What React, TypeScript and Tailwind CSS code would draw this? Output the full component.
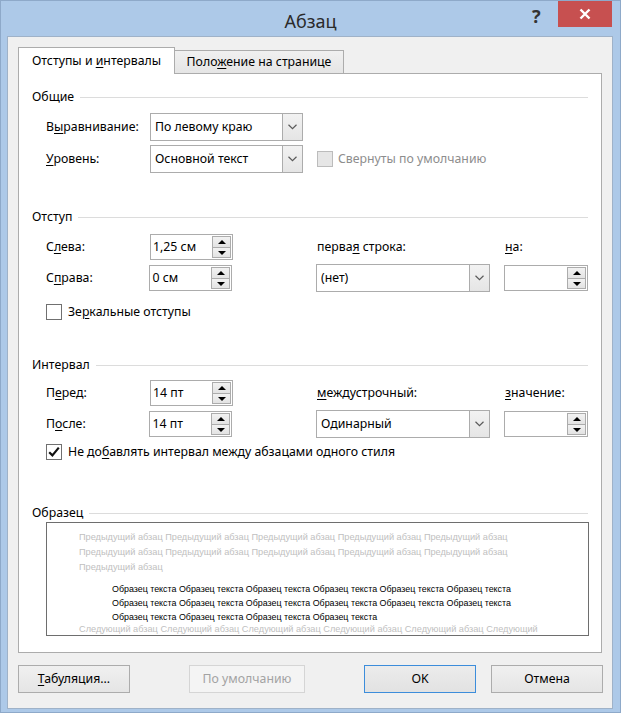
import React from "react";

const U = ({ children }: { children: React.ReactNode }) => (
  <span className="underline decoration-1 underline-offset-[2px]">{children}</span>
);

function Chevron() {
  return (
    <svg width="9" height="6" viewBox="0 0 9 6">
      <path d="M0.5 0.8 L4.5 4.6 L8.5 0.8" fill="none" stroke="#5a5a5a" strokeWidth="1.2" />
    </svg>
  );
}

function Dropdown({ value, width }: { value: string; width: string }) {
  return (
    <div className={`flex h-[28px] ${width} border border-[#acacac] bg-white`}>
      <div className="flex flex-1 items-center pl-[4px] text-black">
        <span>{value}</span>
      </div>
      <div className="flex w-[20px] items-center justify-center border-l border-[#acacac] bg-gradient-to-b from-[#f2f2f2] to-[#e5e5e5]">
        <Chevron />
      </div>
    </div>
  );
}

function Spin({ value, width }: { value: string; width: string }) {
  return (
    <div className={`flex h-[26px] ${width} border border-[#acacac] bg-white`}>
      <div className="flex flex-1 items-center pl-[2px] text-black">
        <span>{value}</span>
      </div>
      <div className="flex w-[21px] flex-col p-[1px]">
        <div className="flex h-[12px] items-center justify-center border border-[#acacac] bg-gradient-to-b from-[#f2f2f2] to-[#e3e3e3]">
          <svg width="8" height="4" viewBox="0 0 8 4">
            <path d="M4 0 L8 4 L0 4 Z" fill="#000" />
          </svg>
        </div>
        <div className="-mt-[1px] flex h-[11px] items-center justify-center border border-[#acacac] bg-gradient-to-b from-[#f2f2f2] to-[#e3e3e3]">
          <svg width="8" height="4" viewBox="0 0 8 4">
            <path d="M0 0 L8 0 L4 4 Z" fill="#000" />
          </svg>
        </div>
      </div>
    </div>
  );
}

function Checkbox({ checked, disabled }: { checked?: boolean; disabled?: boolean }) {
  return (
    <div
      className={`flex h-[16px] w-[16px] shrink-0 items-center justify-center border ${
        disabled ? "border-[#bcbcbc] bg-[#e6e6e6]" : "border-[#707070] bg-white"
      }`}
    >
      {checked && (
        <svg width="14" height="14" viewBox="0 0 14 14">
          <path d="M2.2 7.2 L5.4 10.4 L11.8 2.6" fill="none" stroke="#111" strokeWidth="2.2" />
        </svg>
      )}
    </div>
  );
}

function Header({ children }: { children: React.ReactNode }) {
  return (
    <div className="flex h-[16px] items-center">
      <span className="text-black">{children}</span>
      <div className="ml-[6px] h-px flex-1 bg-[#dcdcdc]" />
    </div>
  );
}

function Btn({ children, className }: { children: React.ReactNode; className: string }) {
  return (
    <div className={`flex h-[28px] w-[112px] items-center justify-center border ${className}`}>
      <span>{children}</span>
    </div>
  );
}

const grayLine = "Предыдущий абзац Предыдущий абзац Предыдущий абзац Предыдущий абзац Предыдущий абзац";
const sample6 = "Образец текста Образец текста Образец текста Образец текста Образец текста Образец текста";
const sample4 = "Образец текста Образец текста Образец текста Образец текста";
const nextLine = "Следующий абзац Следующий абзац Следующий абзац Следующий абзац Следующий абзац Следующий";

export default function App() {
  return (
    <div className="flex h-[713px] w-[621px] flex-col overflow-hidden border border-[#8ea9c9] bg-[#adc9e8] font-['Segoe_UI','Noto_Sans',sans-serif] text-[12.3px] leading-[16px] text-black">
      {/* Title bar */}
      <div className="relative flex h-[35px] shrink-0 items-center justify-center">
        <span className="pt-[4px] text-[18px] leading-[24px] text-[#2b2b2b]">Абзац</span>
        <span className="absolute left-[531px] top-[3px] text-[18px] leading-[24px] font-bold text-[#333]">?</span>
        <div className="absolute right-[8px] top-[-1px] flex h-[27px] w-[54px] items-center justify-center bg-[#c75050]">
          <svg width="12" height="12" viewBox="0 0 12 12">
            <path d="M1.5 1.5 L10.5 10.5 M10.5 1.5 L1.5 10.5" stroke="#fff" strokeWidth="2.4" />
          </svg>
        </div>
      </div>

      {/* Content */}
      <div className="ml-[6px] mr-[7px] flex h-[673px] shrink-0 flex-col border border-[#9fb2c8] bg-[#f0f0f0] pl-[10px] pt-[10px]">
        {/* Tabs */}
        <div className="flex h-[26px] items-start">
          <div className="relative z-10 flex h-[27px] w-[157px] items-center justify-center border-l border-r border-t border-[#acacac] bg-white">
            <span>
              Отступы и <U>и</U>нтервалы
            </span>
          </div>
          <div className="mt-[3px] flex h-[23px] w-[169px] items-center justify-center border-r border-t border-[#acacac] bg-gradient-to-b from-[#f0f0f0] to-[#e5e5e5]">
            <span>
              Поло<U>ж</U>ение на странице
            </span>
          </div>
        </div>

        {/* Panel */}
        <div className="flex h-[580px] w-[584px] flex-col border border-[#acacac] bg-white px-[13px]">
          <div className="mt-[15px]">
            <Header>Общие</Header>
          </div>
          <div className="mt-[8px] flex h-[28px] items-center pl-[14px]">
            <div className="w-[104px]">
              В<U>ы</U>равнивание:
            </div>
            <Dropdown value="По левому краю" width="w-[153px]" />
          </div>
          <div className="mt-[4px] flex h-[28px] items-center pl-[14px]">
            <div className="w-[104px]">
              <U>У</U>ровень:
            </div>
            <Dropdown value="Основной текст" width="w-[153px]" />
            <div className="ml-[14px] flex items-center">
              <Checkbox disabled />
              <span className="ml-[5px] text-[#8d8d8d]">Свернуты по умолчанию</span>
            </div>
          </div>

          <div className="mt-[36px]">
            <Header>Отступ</Header>
          </div>
          <div className="mt-[9px] flex h-[26px] items-center pl-[14px]">
            <div className="w-[104px]">
              С<U>л</U>ева:
            </div>
            <Spin value="1,25 см" width="w-[83px]" />
            <div className="ml-[84px] w-[188px]">
              перва<U>я</U> строка:
            </div>
            <div>
              <U>н</U>а:
            </div>
          </div>
          <div className="mt-[4px] flex h-[28px] items-center pl-[14px]">
            <div className="w-[104px]">
              С<U>п</U>рава:
            </div>
            <Spin value="0 см" width="w-[83px]" />
            <div className="ml-[84px]">
              <Dropdown value="(нет)" width="w-[174px]" />
            </div>
            <div className="ml-[14px]">
              <Spin value="" width="w-[84px]" />
            </div>
          </div>
          <div className="mt-[12px] flex h-[16px] items-center pl-[14px]">
            <Checkbox />
            <span className="ml-[6px]">
              Зе<U>р</U>кальные отступы
            </span>
          </div>

          <div className="mt-[37px]">
            <Header>Интервал</Header>
          </div>
          <div className="mt-[7px] flex h-[26px] items-center pl-[14px]">
            <div className="w-[104px]">
              П<U>е</U>ред:
            </div>
            <Spin value="14 пт" width="w-[83px]" />
            <div className="ml-[84px] w-[188px]">
              <U>м</U>еждустрочный:
            </div>
            <div>
              <U>з</U>начение:
            </div>
          </div>
          <div className="mt-[4px] flex h-[28px] items-center pl-[14px]">
            <div className="w-[104px]">
              П<U>о</U>сле:
            </div>
            <Spin value="14 пт" width="w-[83px]" />
            <div className="ml-[84px]">
              <Dropdown value="Одинарный" width="w-[174px]" />
            </div>
            <div className="ml-[14px]">
              <Spin value="" width="w-[84px]" />
            </div>
          </div>
          <div className="mt-[6px] flex h-[16px] items-center pl-[14px]">
            <Checkbox checked />
            <span className="ml-[6px]">
              Не до<U>б</U>авлять интервал между абзацами одного стиля
            </span>
          </div>

          <div className="mt-[45px]">
            <Header>Образец</Header>
          </div>
          <div className="ml-[14px] mt-[1px] h-[114px] w-[543px] overflow-hidden border border-[#6e6e6e] bg-white font-['Liberation_Sans',sans-serif] whitespace-nowrap">
            <div className="pl-[32px] pt-[7px] text-[9.2px] leading-[15px] text-[#c0c0c0]">
              <div>{grayLine}</div>
              <div>{grayLine}</div>
              <div>Предыдущий абзац</div>
            </div>
            <div className="mt-[7px] pl-[65px] text-[8.9px] leading-[14px] text-black">
              <div>{sample6}</div>
              <div>{sample6}</div>
              <div>{sample4}</div>
            </div>
            <div className="pl-[32px] text-[9.2px] leading-[10px] text-[#c0c0c0]">{nextLine}</div>
          </div>
        </div>

        {/* Buttons */}
        <div className="mt-[12px] flex">
          <Btn className="border-[#acacac] bg-gradient-to-b from-[#f0f0f0] to-[#e5e5e5]">
            <U>Т</U>абуляция...
          </Btn>
          <Btn className="ml-[59px] w-[116px] border-[#d5d5d5] bg-[#f4f4f4] text-[#a3a3a3]">По умолчанию</Btn>
          <Btn className="ml-[59px] border-[#3c8ddb] bg-gradient-to-b from-[#ececec] to-[#e2e2e2]">OK</Btn>
          <Btn className="ml-[15px] border-[#acacac] bg-gradient-to-b from-[#f0f0f0] to-[#e5e5e5]">Отмена</Btn>
        </div>
      </div>
    </div>
  );
}
